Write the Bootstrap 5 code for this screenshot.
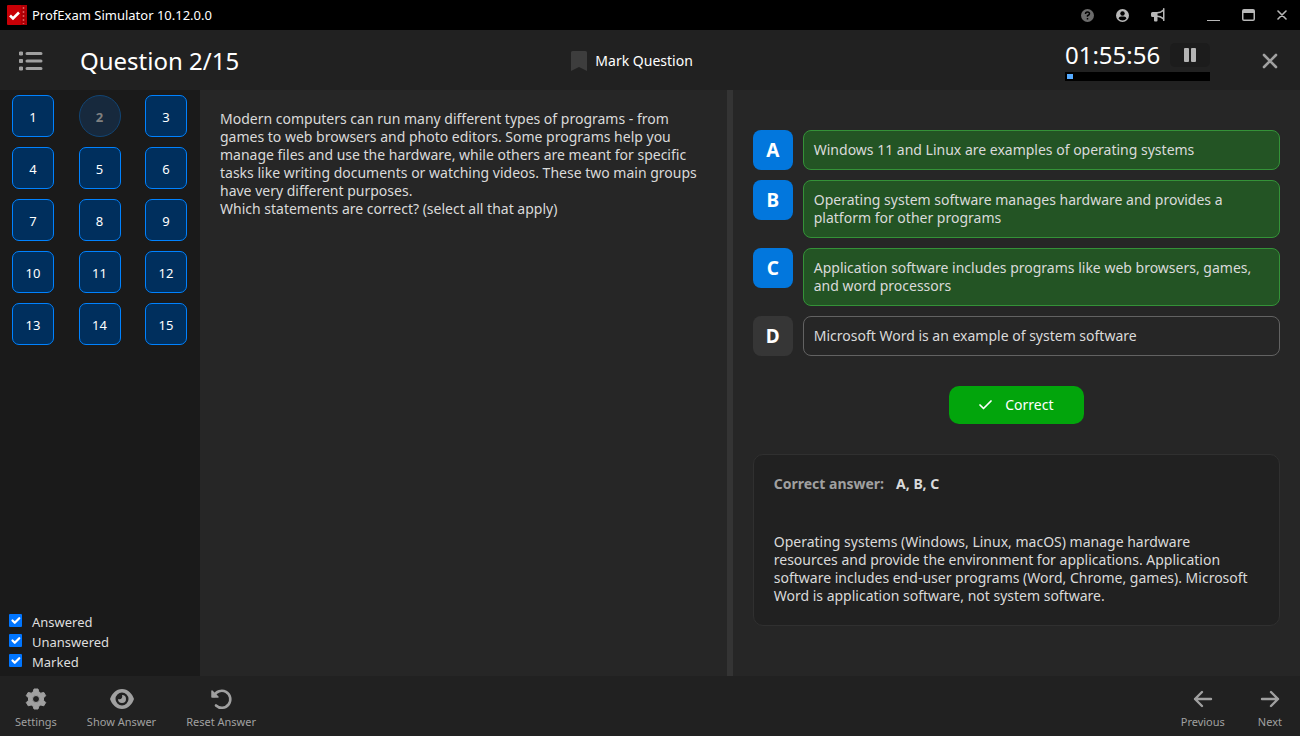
<!DOCTYPE html>
<html lang="en" data-bs-theme="dark">
<head>
<meta charset="utf-8">
<meta name="viewport" content="width=device-width, initial-scale=1">
<title>ProfExam Simulator</title>
<link rel="stylesheet" href="https://cdn.jsdelivr.net/npm/bootstrap@5.3.0/dist/css/bootstrap.min.css">
<script src="https://cdn.jsdelivr.net/npm/bootstrap@5.3.0/dist/js/bootstrap.bundle.min.js" defer></script>
<style>
  body { font: 14px/18px "Noto Sans", sans-serif; background: #262626; color: #dadada; }
  button { color: inherit; background: none; border: 0; padding: 0; }
  svg { display: block; fill: currentColor; flex: none; }
  .line-icon { fill: none; stroke: currentColor; stroke-linecap: round; stroke-linejoin: round; }
  .titlebar { height: 30px; background: #000; color: #fff; font-size: 13px; padding: 0 13px 0 7px; gap: 5px; }
  .titlebar button { color: #b8b8b8; }
  .titlebar .dimmed { color: #6c6c6c; }
  .tools { gap: 22px; margin-right: 37px; }
  .controls { gap: 22px; }
  .topbar { height: 60px; background: #212121; color: #fff; padding: 2px 20px 0 18px; position: relative; z-index: 2; }
  .heading { gap: 37px; }
  .gray { color: #a0a0a0; }
  .big { font-size: 24px; line-height: 30px; font-weight: 400; }
  .timer { width: 145px; margin: 0 50px 0 40px; }
  .time { line-height: 26px; }
  .pause { width: 40px; height: 24px; background: #1c1c1c; border-radius: 5px; color: #b4b4b4; }
  .track { height: 9px; background: #000; padding: 2px; border-radius: 0; }
  .track .progress-bar { background: #55aaff; }
  .sidebar { width: 200px; background: #1a1a1a; flex: none; font-size: 13px; padding: 5px 0 4px; }
  .numbers { display: grid; grid-template-columns: repeat(3, 42px); justify-content: space-between; gap: 10px; padding: 0 13px 0 12px; }
  .numbers .btn { height: 42px; padding: 1px 0 0; font-size: 13px; line-height: 18px; color: #fff; background: #002f5d; border: 1px solid #0082ff; border-radius: 7px; }
  .numbers .current { color: #808080; background: #17293d; border-color: #124574; border-radius: 50%; font-weight: 700; opacity: 1; }
  .filters { padding-left: 9px; }
  .filters label { height: 20px; line-height: 20px; gap: 10px; color: #dedede; }
  .filters .form-check-input { width: 13px; height: 13px; margin: 2px 0 0; border: 0; border-radius: 1px; background-size: 15px; }
  .filters .form-check-input:checked { background-color: #0075ff; }
  .question { flex: 13 1 0; min-width: 0; }
  .splitter { width: 6px; background: #343434; flex: none; }
  .answers { flex: 14 1 0; min-width: 0; }
  .qtext { padding: 20px; }
  .atext { padding: 40px 20px 20px; }
  .choices, .choices > div { gap: 10px; }
  .letter { width: 40px; height: 40px; padding: 0; flex: none; border: 0; border-radius: 8px; background: #363636; color: #fff; font-size: 19px; font-weight: 700; }
  .letter.chosen { background: #0277dd; }
  .choice { border: 1px solid #626262; border-radius: 8px; padding: 10px; }
  .choice.right { background: #235424; border-color: #349238; }
  .verdict { width: 135px; height: 38px; background: #02a50c; color: #fff; border-radius: 10px; gap: 12px; margin: 30px auto; }
  .explain { background: #212121; border: 1px solid #303030; border-radius: 10px; padding: 20px; }
  .result { gap: 12px; }
  .explain p { margin: 40px 0 0; padding-right: 8px; }
  .bottombar { height: 60px; background: #212121; color: #a0a0a0; font-size: 11px; line-height: 16px; padding: 11px 18px 0 15px; position: relative; z-index: 2; }
  .bottombar > div { gap: 30px; }
  .bottombar .moves { gap: 33px; }
  .bottombar button { display: flex; flex-direction: column; align-items: center; gap: 3px; height: 44px; }
</style>
</head>
<body>
<div class="d-flex flex-column vh-100">
  <header class="titlebar d-flex align-items-center">
    <svg width="20" height="20" viewBox="0 0 20 20" aria-hidden="true">
      <rect width="20" height="20" rx="1" fill="#c80006"/><path d="M14 0h6v20h-6z" fill="#b00006"/>
      <path d="M3 10.500l3 3 6-6" fill="none" stroke="#fff" stroke-width="2.600"/>
      <path d="M16.500 2v17" stroke="#e05858" stroke-width="1.500" stroke-dasharray="2 2"/>
    </svg>
    <span>ProfExam Simulator 10.12.0.0</span>
    <div class="tools ms-auto d-flex align-items-center">
      <button class="dimmed" aria-label="Help"><svg width="13" height="13" viewBox="0 0 26 26"><circle cx="13" cy="13" r="13"/><path d="M9 10q0-4 4-4t4 3.500q0 2-4 4v2M13 18v3" fill="none" stroke="#000" stroke-width="3"/></svg></button>
      <button aria-label="Account"><svg width="13" height="13" viewBox="0 0 26 26"><circle cx="13" cy="13" r="13"/><circle cx="13" cy="9" r="4.500" fill="#000"/><path d="M5 19q1-4 5-4h6q4 0 5 4-3 4-8 4t-8-4z" fill="#000"/></svg></button>
      <button aria-label="News"><svg width="14" height="14" viewBox="0 0 28 28"><path d="M3 8h9q7 0 12-5V1q0-1 1.500-1T27 1v24q0 1-1.500 1T24 25v-2q-5-5-11-5v7q0 2-2 2H8q-2 0-2-2v-7H3q-3 0-3-3v-4q0-3 3-3zm10 3v4q6 0 11 4V7q-5 4-11 4z" fill-rule="evenodd"/></svg></button>
    </div>
    <div class="controls d-flex align-items-center">
      <button aria-label="Minimize"><svg width="13" height="11" viewBox="0 0 13 11"><path d="M0 10h13v1H0z"/></svg></button>
      <button aria-label="Maximize"><svg width="13" height="12" viewBox="0 0 13 12"><path d="M2 0h9q2 0 2 2v8q0 2-2 2H2q-2 0-2-2V2q0-2 2-2zM1.500 4v6q0 .5.500.500h9q.5 0 .5-.5V4z" fill-rule="evenodd"/></svg></button>
      <button aria-label="Close window"><svg class="line-icon" width="10" height="10" viewBox="0 0 10 10" stroke-width="1.600"><path d="M1 1l8 8M9 1L1 9"/></svg></button>
    </div>
  </header>

  <div class="topbar d-flex align-items-center justify-content-between flex-shrink-0">
    <div class="heading d-flex align-items-center">
      <button class="gray" aria-label="Question list"><svg width="25" height="22" viewBox="0 0 25 22"><path d="M1.500 2h3v3h-3zM1.500 9.500h3v3h-3zM1.500 17h3v3h-3z" stroke="currentColor" stroke-linejoin="round" stroke-width="1"/><path d="M9 3.500h14M9 11h14M9 18.500h14" stroke="currentColor" stroke-width="3" stroke-linecap="round"/></svg></button>
      <h1 class="big m-0 text-nowrap">Question 2/15</h1>
    </div>
    <button class="d-flex align-items-center gap-2"><svg width="16" height="20" viewBox="0 0 16 20" style="color:#3d3d3d"><path d="M1.500 0h13Q16 0 16 1.500V20l-8-4-8 4V1.500Q0 0 1.500 0z"/></svg>Mark Question</button>
    <div class="d-flex align-items-center">
      <div class="timer">
        <div class="d-flex align-items-center justify-content-between mb-1"><span class="big time">01:55:56</span>
          <button class="pause d-flex align-items-center justify-content-center" aria-label="Pause"><svg width="12" height="14" viewBox="0 0 12 14"><rect width="5" height="14" rx="1"/><rect x="7" width="5" height="14" rx="1"/></svg></button></div>
        <div class="track progress" role="progressbar" aria-label="Time used" aria-valuenow="4" aria-valuemin="0" aria-valuemax="100"><div class="progress-bar" style="width:4%"></div></div>
      </div>
      <button class="gray" aria-label="Close exam"><svg class="line-icon" width="20" height="20" viewBox="0 0 20 20" stroke-width="2.600"><path d="M4 4l12 12M16 4L4 16"/></svg></button>
    </div>
  </div>

  <main class="d-flex flex-grow-1">
    <nav class="sidebar d-flex flex-column justify-content-between" aria-label="Questions">
      <div class="numbers">
        <button class="btn">1</button><button class="btn current">2</button><button class="btn">3</button>
        <button class="btn">4</button><button class="btn">5</button><button class="btn">6</button>
        <button class="btn">7</button><button class="btn">8</button><button class="btn">9</button>
        <button class="btn">10</button><button class="btn">11</button><button class="btn">12</button>
        <button class="btn">13</button><button class="btn">14</button><button class="btn">15</button>
      </div>
      <div class="filters">
        <label class="d-flex"><input class="form-check-input" type="checkbox" checked>Answered</label>
        <label class="d-flex"><input class="form-check-input" type="checkbox" checked>Unanswered</label>
        <label class="d-flex"><input class="form-check-input" type="checkbox" checked>Marked</label>
      </div>
    </nav>
    <section class="question">
      <div class="qtext">Modern computers can run many different types of programs - from games to web browsers and photo editors. Some programs help you manage files and use the hardware, while others are meant for specific tasks like writing documents or watching videos. These two main groups have very different purposes.<br>Which statements are correct? (select all that apply)</div>
    </section>
    <div class="splitter"></div>
    <section class="answers">
      <div class="atext">
        <div class="d-grid choices">
          <div class="d-flex"><button class="btn letter chosen">A</button><div class="choice right flex-grow-1">Windows 11 and Linux are examples of operating systems</div></div>
          <div class="d-flex"><button class="btn letter chosen">B</button><div class="choice right flex-grow-1">Operating system software manages hardware and provides a platform for other programs</div></div>
          <div class="d-flex"><button class="btn letter chosen">C</button><div class="choice right flex-grow-1">Application software includes programs like web browsers, games, and word processors</div></div>
          <div class="d-flex"><button class="btn letter">D</button><div class="choice flex-grow-1">Microsoft Word is an example of system software</div></div>
        </div>
        <div class="verdict d-flex align-items-center justify-content-center"><svg class="line-icon" width="14" height="14" viewBox="0 0 14 14" stroke-width="1.700"><path d="M1 7l3.500 3.500L12 3"/></svg>Correct</div>
        <div class="explain">
          <div class="result d-flex fw-bold"><span class="gray">Correct answer:</span><span>A, B, C</span></div>
          <p>Operating systems (Windows, Linux, macOS) manage hardware resources and provide the environment for applications. Application software includes end-user programs (Word, Chrome, games). Microsoft Word is application software, not system software.</p>
        </div>
      </div>
    </section>
  </main>

  <footer class="bottombar d-flex justify-content-between flex-shrink-0">
    <div class="d-flex">
      <button><svg width="24" height="24" viewBox="0 0 24 24"><path d="M10 2h4l.8 3 2 1.200 3-.8 1.900 3.300-2.200 2.200v2.400l2.200 2.200-1.900 3.300-3-.8-2 1.200L14 22h-4l-.8-2.800-2-1.200-3 .8-1.900-3.300 2.200-2.200v-2.400L2.300 8.700l1.900-3.300 3 .8 2-1.200zM12 8.500a3.500 3.500 0 100 7 3.500 3.500 0 000-7z" fill-rule="evenodd" stroke="currentColor" stroke-width="1" stroke-linejoin="round"/></svg>Settings</button>
      <button><svg width="26" height="24" viewBox="0 0 26 24"><path d="M13 2c6 0 10 4.500 12 10-2 5.500-6 10-12 10S3 17.500 1 12C3 6.500 7 2 13 2zm0 3.500a6.500 6.500 0 100 13 6.500 6.500 0 000-13z" fill-rule="evenodd"/><path d="M13 8a4 4 0 11-4 4c3 1 5-1 4-4z"/></svg>Show Answer</button>
      <button><svg width="24" height="24" viewBox="0 0 24 24"><path d="M5 9a8.500 8.500 0 11 2 9.500" fill="none" stroke="currentColor" stroke-width="2.600" stroke-linecap="round"/><path d="M3 4v6h6z" stroke="currentColor" stroke-width="1.500" stroke-linejoin="round"/></svg>Reset Answer</button>
    </div>
    <div class="moves d-flex">
      <button><svg class="line-icon" width="24" height="24" viewBox="0 0 24 24" stroke-width="2.400"><path d="M20 12H4M11 5l-7 7 7 7"/></svg>Previous</button>
      <button><svg class="line-icon" width="24" height="24" viewBox="0 0 24 24" stroke-width="2.400"><path d="M4 12h16M13 5l7 7-7 7"/></svg>Next</button>
    </div>
  </footer>
</div>
</body>
</html>
